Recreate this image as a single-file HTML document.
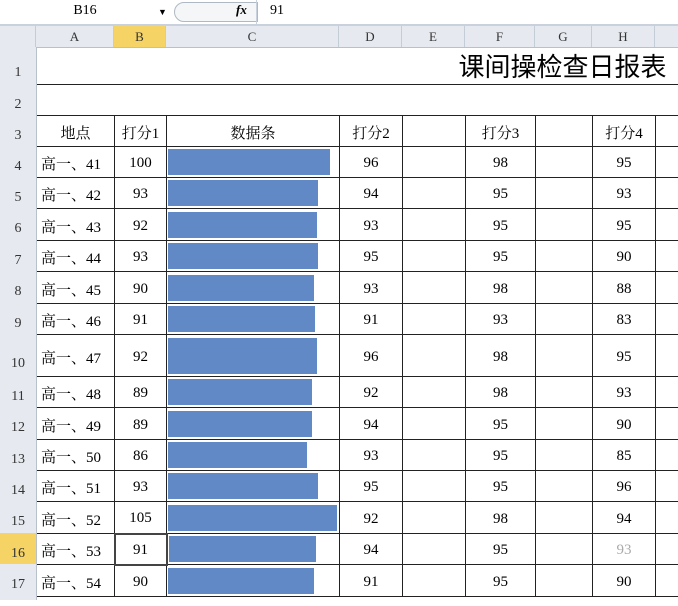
<!DOCTYPE html><html><head><meta charset="utf-8"><style>
body{margin:0;width:678px;height:600px;overflow:hidden;background:#fff;font-family:"Liberation Serif","Noto Serif CJK SC","Noto Sans CJK SC",serif;position:relative}
.fb{position:absolute;left:0;top:0;width:678px;height:24px;background:#fff;border-bottom:2px solid #c9d1dc}
.nb{position:absolute;left:0;top:1px;width:170px;height:20px;font-size:14px;line-height:20px;text-align:center}
.ch{position:absolute;top:26px;left:0;width:678px;height:21px;background:#e6eaf0;border-bottom:1px solid #b8c0cc;font-size:13px;color:#333}
.ch div{position:absolute;top:0;height:21px;line-height:21px;text-align:center;border-right:1px solid #c4ccd6}
.rh{position:absolute;left:0;width:36px;background:#e6eaf0;border-right:1px solid #b8c0cc;font-size:14px;color:#333;text-align:center}
table{position:absolute;left:36px;top:47px;width:649px;border-collapse:collapse;table-layout:fixed;font-size:15px}
td{padding:3px 0 0 0;text-align:center;border:1.5px solid #222;white-space:nowrap;overflow:hidden}
td.l{text-align:left;padding-left:4px}
td.b{padding-top:0}
.bar{height:26px;background:#6089c6;margin-left:1px}
</style></head><body>
<div class="fb"><div class="nb">B16</div>
<div style="position:absolute;left:158px;top:7px;font-size:9px">▼</div>
<div style="position:absolute;left:174px;top:2px;width:82px;height:18px;border:1px solid #b0b8c4;border-radius:10px 0 0 10px;background:#f4f6f8"></div>
<div style="position:absolute;left:236px;top:2px;font-style:italic;font-weight:bold;font-size:13px">fx</div>
<div style="position:absolute;left:256px;top:0;width:1px;height:24px;background:#c9d1dc"></div>
<div style="position:absolute;left:270px;top:3px;font-size:14px">91</div></div>
<div class="ch">
<div style="left:0;width:35px"></div><div style="left:36px;width:77px">A</div><div style="left:114px;width:51px;background:#f6d365">B</div><div style="left:166px;width:172px">C</div><div style="left:339px;width:62px">D</div><div style="left:402px;width:62px">E</div><div style="left:465px;width:69px">F</div><div style="left:535px;width:56px">G</div><div style="left:592px;width:62px">H</div></div>
<table>
<colgroup><col style="width:78px"><col style="width:52px"><col style="width:173px"><col style="width:63px"><col style="width:63px"><col style="width:70px"><col style="width:57px"><col style="width:63px"><col style="width:30px"></colgroup>
<tr style="height:37px"><td colspan="9" style="border:none;border-bottom:1.5px solid #222;text-align:right;font-size:26px;padding:0 19px 0 0;font-family:'Noto Sans CJK SC',sans-serif">课间操检查日报表</td></tr>
<tr style="height:31px"><td colspan="9" style="border-left:none;border-right:none"></td></tr>
<tr style="height:31px"><td>地点</td><td>打分1</td><td>数据条</td><td>打分2</td><td></td><td>打分3</td><td></td><td>打分4</td><td style="border-right:none"></td></tr>
<tr style="height:31px"><td class="l">高一、41</td><td>100</td><td class="b"><div class="bar" style="width:162px"></div></td><td>96</td><td></td><td>98</td><td></td><td>95</td><td></td></tr>
<tr style="height:31px"><td class="l">高一、42</td><td>93</td><td class="b"><div class="bar" style="width:150px"></div></td><td>94</td><td></td><td>95</td><td></td><td>93</td><td></td></tr>
<tr style="height:32px"><td class="l">高一、43</td><td>92</td><td class="b"><div class="bar" style="width:149px"></div></td><td>93</td><td></td><td>95</td><td></td><td>95</td><td></td></tr>
<tr style="height:31px"><td class="l">高一、44</td><td>93</td><td class="b"><div class="bar" style="width:150px"></div></td><td>95</td><td></td><td>95</td><td></td><td>90</td><td></td></tr>
<tr style="height:32px"><td class="l">高一、45</td><td>90</td><td class="b"><div class="bar" style="width:146px"></div></td><td>93</td><td></td><td>98</td><td></td><td>88</td><td></td></tr>
<tr style="height:31px"><td class="l">高一、46</td><td>91</td><td class="b"><div class="bar" style="width:147px"></div></td><td>91</td><td></td><td>93</td><td></td><td>83</td><td></td></tr>
<tr style="height:42px"><td class="l">高一、47</td><td>92</td><td class="b"><div class="bar" style="width:149px;height:36px"></div></td><td>96</td><td></td><td>98</td><td></td><td>95</td><td></td></tr>
<tr style="height:31px"><td class="l">高一、48</td><td>89</td><td class="b"><div class="bar" style="width:144px"></div></td><td>92</td><td></td><td>98</td><td></td><td>93</td><td></td></tr>
<tr style="height:32px"><td class="l">高一、49</td><td>89</td><td class="b"><div class="bar" style="width:144px"></div></td><td>94</td><td></td><td>95</td><td></td><td>90</td><td></td></tr>
<tr style="height:31px"><td class="l">高一、50</td><td>86</td><td class="b"><div class="bar" style="width:139px"></div></td><td>93</td><td></td><td>95</td><td></td><td>85</td><td></td></tr>
<tr style="height:31px"><td class="l">高一、51</td><td>93</td><td class="b"><div class="bar" style="width:150px"></div></td><td>95</td><td></td><td>95</td><td></td><td>96</td><td></td></tr>
<tr style="height:32px"><td class="l">高一、52</td><td>105</td><td class="b"><div class="bar" style="width:169px"></div></td><td>92</td><td></td><td>98</td><td></td><td>94</td><td></td></tr>
<tr style="height:31px"><td class="l">高一、53</td><td style="border:2px solid #444">91</td><td class="b"><div class="bar" style="width:147px"></div></td><td>94</td><td></td><td>95</td><td></td><td style="color:#aaa">93</td><td></td></tr>
<tr style="height:32px"><td class="l">高一、54</td><td>90</td><td class="b"><div class="bar" style="width:146px"></div></td><td>91</td><td></td><td>95</td><td></td><td>90</td><td></td></tr>
</table>
<div class="rh" style="top:47px;height:37px;line-height:52px">1</div>
<div class="rh" style="top:84px;height:31px;line-height:42px">2</div>
<div class="rh" style="top:115px;height:31px;line-height:42px">3</div>
<div class="rh" style="top:146px;height:31px;line-height:42px">4</div>
<div class="rh" style="top:177px;height:31px;line-height:42px">5</div>
<div class="rh" style="top:208px;height:32px;line-height:42px">6</div>
<div class="rh" style="top:240px;height:31px;line-height:42px">7</div>
<div class="rh" style="top:271px;height:32px;line-height:42px">8</div>
<div class="rh" style="top:303px;height:31px;line-height:42px">9</div>
<div class="rh" style="top:334px;height:42px;line-height:60px">10</div>
<div class="rh" style="top:376px;height:31px;line-height:42px">11</div>
<div class="rh" style="top:407px;height:32px;line-height:42px">12</div>
<div class="rh" style="top:439px;height:31px;line-height:42px">13</div>
<div class="rh" style="top:470px;height:31px;line-height:42px">14</div>
<div class="rh" style="top:501px;height:32px;line-height:42px">15</div>
<div class="rh" style="top:533px;height:31px;line-height:42px;background:#f6d365">16</div>
<div class="rh" style="top:564px;height:36px;line-height:42px">17</div>
</body></html>
